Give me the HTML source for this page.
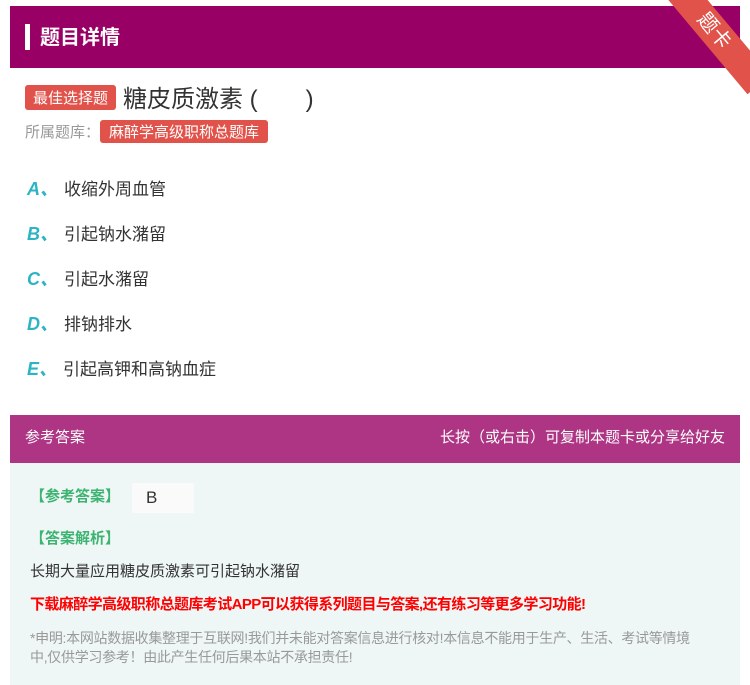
<!DOCTYPE html>
<html><head><meta charset="utf-8"><style>
body{margin:0;width:750px;height:685px;background:#fff;font-family:"Liberation Sans","Noto Sans CJK SC",sans-serif;position:relative;overflow:hidden}
.hdr{position:absolute;left:10px;top:6px;width:730px;height:62px;background:#990066}
.hdr .bar{position:absolute;left:15px;top:18px;width:5px;height:26px;background:#fff}
.hdr .t{position:absolute;left:30px;top:15px;color:#fff;font-size:20px;font-weight:bold}
.ribbon{position:absolute;right:-34px;top:16px;width:140px;height:30px;background:#e0524a;transform:rotate(50deg);color:#fff;text-align:center;font-size:20px;line-height:30px}
.tag{display:inline-block;background:#e0524a;color:#fff;border-radius:3px}
.q{position:absolute;left:25px;top:79px;font-size:24px;color:#333}
.q .tag{font-size:15px;padding:2px 8px;vertical-align:4px;margin-right:7px}
.lib{position:absolute;left:25px;top:120px;font-size:15px;color:#999}
.lib .tag{font-size:15px;padding:1px 9px}
.opt{position:absolute;left:27px;font-size:17px;color:#333}
.opt b{color:#2bb4c4;font-style:italic;font-size:18px;margin-right:6px}
.ah{position:absolute;left:10px;top:415px;width:730px;height:48px;background:#ad3584;color:#fff;font-size:15px;line-height:46px}
.ab{position:absolute;left:10px;top:463px;width:730px;height:222px;background:#eef6f6}
.g{color:#3cb371;font-size:15px;font-weight:bold;position:absolute}
</style></head><body>
<div class="hdr"><div class="bar"></div><div class="t">题目详情</div></div>
<div class="ribbon">题卡</div>
<div class="q"><span class="tag">最佳选择题</span>糖皮质激素 (　　)</div>
<div class="lib">所属题库：<span class="tag">麻醉学高级职称总题库</span></div>
<div class="opt" style="top:175px"><b>A、</b>收缩外周血管</div>
<div class="opt" style="top:220px"><b>B、</b>引起钠水潴留</div>
<div class="opt" style="top:265px"><b>C、</b>引起水潴留</div>
<div class="opt" style="top:310px"><b>D、</b>排钠排水</div>
<div class="opt" style="top:355px"><b>E、</b>引起高钾和高钠血症</div>
<div class="ah"><span style="margin-left:15px">参考答案</span><span style="position:absolute;right:15px">长按（或右击）可复制本题卡或分享给好友</span></div>
<div class="ab">
<div class="g" style="left:20px;top:22px">【参考答案】</div>
<div style="position:absolute;left:122px;top:20px;width:62px;height:30px;background:#fafafa;font-size:17px;color:#333;padding-left:14px;box-sizing:border-box;line-height:30px">B</div>
<div class="g" style="left:20px;top:64px">【答案解析】</div>
<div style="position:absolute;left:20px;top:97px;font-size:15px;color:#333">长期大量应用糖皮质激素可引起钠水潴留</div>
<div style="position:absolute;left:20px;top:130px;font-size:15px;color:#f00;font-weight:bold;letter-spacing:-0.6px">下载麻醉学高级职称总题库考试APP可以获得系列题目与答案,还有练习等更多学习功能!</div>
<div style="position:absolute;left:20px;top:166px;width:672px;font-size:14px;color:#999;line-height:19px;letter-spacing:-0.3px">*申明:本网站数据收集整理于互联网!我们并未能对答案信息进行核对!本信息不能用于生产、生活、考试等情境中,仅供学习参考！由此产生任何后果本站不承担责任!</div>
</div>
</body></html>
